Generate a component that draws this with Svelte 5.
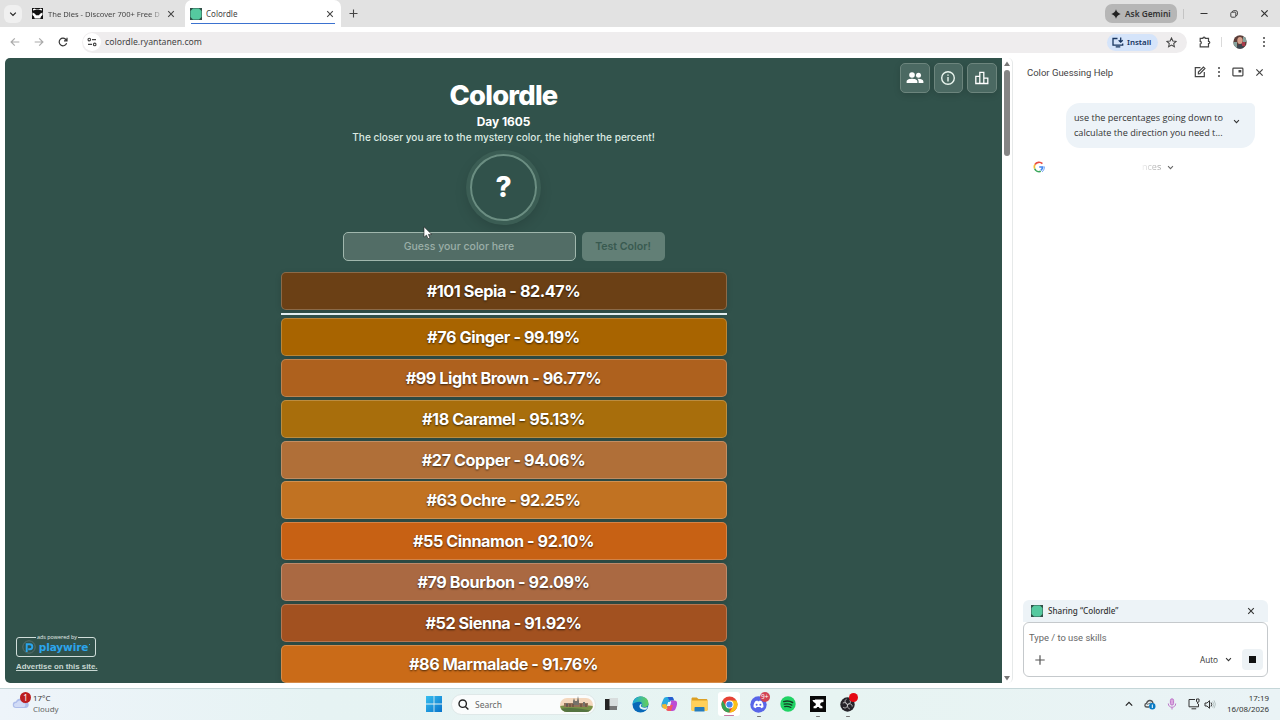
<script>
    const day = 1605;

    const latest = { number: 101, name: 'Sepia', percent: '82.47', color: '#6b4015' };

    const guesses = [
        { number: 76, name: 'Ginger', percent: '99.19', color: '#a86400' },
        { number: 99, name: 'Light Brown', percent: '96.77', color: '#ae611e' },
        { number: 18, name: 'Caramel', percent: '95.13', color: '#a86e0c' },
        { number: 27, name: 'Copper', percent: '94.06', color: '#b06f38' },
        { number: 63, name: 'Ochre', percent: '92.25', color: '#c17222' },
        { number: 55, name: 'Cinnamon', percent: '92.10', color: '#c76114' },
        { number: 79, name: 'Bourbon', percent: '92.09', color: '#aa6942' },
        { number: 52, name: 'Sienna', percent: '91.92', color: '#a25120' },
        { number: 86, name: 'Marmalade', percent: '91.76', color: '#ca6b18' }
    ];

    let guess = '';
</script>

{#snippet close(size)}
    <svg width={size} height={size} viewBox="0 0 10 10" fill="none" stroke="currentColor" stroke-width="1.35"><path d="M1.5 1.5l7 7M8.5 1.5l-7 7" /></svg>
{/snippet}

{#snippet chevron(size)}
    <svg width={size} height={size} viewBox="0 0 10 10" fill="none" stroke="currentColor" stroke-width="1.5"><path d="M1.5 3.2L5 6.7l3.5-3.5" /></svg>
{/snippet}

{#snippet dots()}
    <svg width="4" height="12" viewBox="0 0 4 12" fill="currentColor"><circle cx="2" cy="2" r="1" /><circle cx="2" cy="6" r="1" /><circle cx="2" cy="10" r="1" /></svg>
{/snippet}

{#snippet swatch()}
    <svg width="12" height="12" viewBox="0 0 12 12"><path fill="#315048" d="M0 0h12v12H0z" /><path fill="#55c99f" d="M3 .5h6L11.500 3v6L9 11.500H3L.5 9V3z" /></svg>
{/snippet}

{#snippet row(item)}
    <div class="guess" style="background-color: {item.color}">#{item.number} {item.name} - {item.percent}%</div>
{/snippet}

<div class="screen">
    <div class="tabs">
        <div class="tab-search">{@render chevron(8)}</div>
        <div class="tab">
            <svg width="11" height="11" viewBox="0 0 11 11"><path fill="#111" d="M0 0h11v11H0z" /><path fill="#fff" d="M1 1.200l1.500-.7L4 1.500h3L8.500.5l1.500.7v1.300L8 2H3l-2 .5zM.5 4.500L3 5.800l1 1.400h3l1-1.400 2.500-1.300V7L9 8.500 8.300 10.500H2.700L2 8.500.5 7z" /></svg>
            <span class="tab-title fade">The Dles - Discover 700+ Free D</span>
            {@render close(8)}
        </div>
        <div class="tab active">
            {@render swatch()}
            <span class="tab-title">Colordle</span>
            {@render close(8)}
        </div>
        <svg class="new-tab" width="9" height="9" viewBox="0 0 9 9" stroke="#444" stroke-width="1.1"><path d="M4.500 .5v8M.5 4.500h8" /></svg>
        <div class="gemini">
            <svg width="10" height="10" viewBox="0 0 10 10"><path fill="#222" d="M5 .3Q6 4 9.700 5 6 6 5 9.700 4 6 .3 5 4 4 5 .3z" /></svg>
            Ask Gemini
        </div>
        <span class="strip-line"></span>
        <div class="window-buttons">
            <svg width="8" height="8" viewBox="0 0 8 8" stroke="#333"><path d="M.5 3.500h7" /></svg>
            <svg width="8" height="8" viewBox="0 0 8 8" fill="none" stroke="#333" stroke-width=".9"><rect x=".8" y="2.200" width="5" height="5" rx="1" /><path d="M2.400 1.900c0-.8.500-1.200 1.200-1.200h2.400c.8 0 1.400.6 1.400 1.400v2.300c0 .8-.5 1.200-1.200 1.200" /></svg>
            {@render close(9)}
        </div>
    </div>

    <div class="toolbar">
        <div class="nav">
            <svg class="off" width="10" height="10" viewBox="0 0 10 10"><path d="M9.300 5H1.200M4.800 1.300L1.100 5l3.700 3.700" /></svg>
            <svg class="off" width="10" height="10" viewBox="0 0 10 10"><path d="M.7 5h8.100M5.200 1.300L8.900 5 5.200 8.700" /></svg>
            <svg width="10" height="10" viewBox="0 0 10 10"><path d="M8.600 6.100A3.800 3.800 0 1 1 8.100 2.800L9 3.800M9 .8v3H6" /></svg>
        </div>
        <div class="address">
            <span class="site-info">
                <svg width="10" height="10" viewBox="0 0 10 10" fill="none" stroke="#444" stroke-width="1.100"><circle cx="2.300" cy="2.600" r="1.300" /><path d="M5 2.600h4M1 7.400h4" /><circle cx="7.700" cy="7.400" r="1.300" /></svg>
            </span>
            <span class="url">colordle.ryantanen.com</span>
            <span class="install">
                <svg width="12" height="11" viewBox="0 0 12 11" fill="none" stroke="#17345f" stroke-width="1.300"><path d="M5.500 1.500H1v6.700h9.700V6.600M3.700 9.900h4.600M8.700 .5v4.400M6.700 3.200l2 2 2-2" /></svg>
                Install
            </span>
            <svg width="11" height="11" viewBox="0 0 12 12" fill="none" stroke="#444" stroke-width="1.100"><path d="M6 1l1.500 3.300 3.600.4-2.700 2.400.8 3.600L6 8.900l-3.200 1.800.8-3.600L.9 4.700l3.600-.4z" /></svg>
        </div>
        <svg class="puzzle" width="12" height="12" viewBox="0 0 12 12" fill="none" stroke="#444" stroke-width="1.200"><path d="M1.200 2.300h2.700c0-1.600 2.300-1.600 2.300 0h3.300v3c1.700 0 1.700 2.200 0 2.200v3.300H1.200V8c1.500-.2 1.500-2.400 0-2.600z" /></svg>
        <span class="tool-line"></span>
        <svg class="avatar" width="14" height="14" viewBox="0 0 14 14"><clipPath id="face"><circle cx="7" cy="7" r="6.700" /></clipPath><g clip-path="url(#face)"><path fill="#5a3d38" d="M0 0h14v14H0z" /><path fill="#86a29d" d="M0 7h4v7H0zM10 2h4v5h-4z" /><ellipse cx="7" cy="5.500" rx="2.700" ry="3.500" fill="#d8a18c" /><path fill="#3a4650" d="M3 14l2-4 3-1 4 5z" /><path fill="#a83b4c" d="M9 7h3v4H9z" /></g></svg>
        <span class="menu">{@render dots()}</span>
    </div>

    <div class="content">
        <main>
            <div class="corner-buttons">
                <button aria-label="Friends"><svg width="18" height="14" viewBox="0 0 18 14" fill="#fff"><circle cx="6" cy="4" r="2.800" /><circle cx="12.500" cy="4.200" r="2.500" /><path d="M.6 12v-1.500C.6 8.400 4 7.800 6 7.800s5.400.6 5.400 2.700V12zM12.600 12v-1.500c0-1.100-.5-2-1.300-2.700 2.800-.3 6.100.5 6.100 2.700V12z" /></svg></button>
                <button aria-label="About"><svg width="16" height="16" viewBox="0 0 16 16" fill="none" stroke="#e9f5ee" stroke-width="1.400"><circle cx="8" cy="8" r="6.300" /><path d="M8 7v4.500M8 4.400v1.400" /></svg></button>
                <button aria-label="Statistics"><svg width="14" height="14" viewBox="0 0 14 14" fill="none" stroke="#fff" stroke-width="1.300"><path d="M.8 5.300h4v7.200h-4zM4.800 1.300h4v11.200h-4zM8.800 7.200h4v5.300h-4z" /></svg></button>
            </div>
            <h1>Colordle</h1>
            <h2>Day {day}</h2>
            <p>The closer you are to the mystery color, the higher the percent!</p>
            <div class="mystery">?</div>
            <form>
                <input bind:value={guess} placeholder="Guess your color here" />
                <button disabled>Test Color!</button>
            </form>
            <div class="guesses">
                {@render row(latest)}
                <hr />
                {#each guesses as item}
                    {@render row(item)}
                {/each}
            </div>
            <div class="ads">
                <div class="playwire">
                    <span class="powered">ads powered by</span>
                    <svg width="14" height="14" viewBox="0 0 14 14" fill="none"><circle cx="7" cy="7" r="6.200" stroke="#596f6c" /><path d="M4.700 12V4.200h3.200c3.200 0 3.200 5 0 5H6.200" stroke="#2ba5ed" stroke-width="1.900" /></svg>
                    <b>playwire</b><i></i>
                </div>
                <a href="#advertise">Advertise on this site.</a>
            </div>
        </main>
        <div class="scrollbar">
            <svg width="8" height="6" viewBox="0 0 8 6"><path d="M4 .5L7 5H1z" /></svg>
            <span class="thumb"></span>
            <svg width="8" height="6" viewBox="0 0 8 6"><path d="M4 5.500L1 1h6z" /></svg>
        </div>
        <aside>
            <header>
                <span>Color Guessing Help</span>
                <svg width="12" height="12" viewBox="0 0 12 12" fill="none" stroke="currentColor" stroke-width="1.200"><path d="M6.500 1.700H1.300v9h9V6M4.400 7.800V6l5-5 1.500 1.500-5 5.100z" /></svg>
                {@render dots()}
                <svg width="12" height="10" viewBox="0 0 12 10"><rect x=".9" y="1.200" width="10" height="7.600" rx=".7" fill="none" stroke="currentColor" stroke-width="1.200" /><path fill="currentColor" d="M6.500 3h2.800v2.500H6.500z" /></svg>
                {@render close(9)}
            </header>
            <div class="prompt">
                <span>use the percentages going down to<br />calculate the direction you need t...</span>
                {@render chevron(7)}
            </div>
            <div class="thinking">
                <svg width="12" height="12" viewBox="0 0 12 12" fill="none" stroke-width="1.700"><path stroke="#e94b40" d="M9.400 2.700A4.700 4.700 0 0 0 2 3.500" /><path stroke="#f5bd35" d="M2 3.500a4.700 4.700 0 0 0-.3 4.200" /><path stroke="#3ba75b" d="M1.700 7.700a4.700 4.700 0 0 0 6.100 2.600" /><path stroke="#4387ef" d="M6.200 6h3.400c0 1.700-.6 2.600-1.800 3.300" /><path stroke="#4387ef" stroke-width=".8" d="M11.300 5.500c.2 2.300-.7 4.200-2.200 5.300" /></svg>
                <span class="shimmer">nces</span>
                {@render chevron(7)}
            </div>
            <div class="composer">
                <div class="sharing">
                    {@render swatch()}
                    <span>Sharing “Colordle”</span>
                    {@render close(8)}
                </div>
                <div class="box">
                    <div class="hint">Type / to use skills</div>
                    <div class="actions">
                        <svg width="10" height="10" viewBox="0 0 10 10" stroke="#555" stroke-width="1.200"><path d="M5 .3v9.400M.3 5h9.400" /></svg>
                        <span class="mode">Auto</span>
                        {@render chevron(7)}
                        <span class="stop"></span>
                    </div>
                </div>
            </div>
        </aside>
    </div>

    <footer>
        <div class="weather">
            <div class="cloud">
                <svg width="18" height="14" viewBox="0 0 18 14"><path fill="#aebdea" d="M4 13a3.200 3.200 0 0 1 0-6.500C5 3 11 2 12.500 6 18 6 18 13 13.500 13z" /><path fill="#d1dbf6" d="M3.500 12a2 2 0 0 1 1-4C6 5 10 4.500 11 8c3 0 3 3.500 1 4z" /></svg>
                <span>1</span>
            </div>
            <div>17°C<br /><small>Cloudy</small></div>
        </div>
        <div class="apps">
            <svg width="16" height="16" viewBox="0 0 16 16"><linearGradient id="win" x2="1" y2="1"><stop stop-color="#38bff0" /><stop offset="1" stop-color="#0873cb" /></linearGradient><path fill="url(#win)" d="M0 0h7.600v7.600H0zM8.400 0H16v7.600H8.400zM0 8.400h7.600V16H0zM8.400 8.400H16V16H8.400z" /></svg>
            <div class="search">
                <svg width="11" height="11" viewBox="0 0 11 11" fill="none" stroke="#222" stroke-width="1.400"><circle cx="4.700" cy="4.700" r="3.700" /><path d="M7.400 7.400l3 3" /></svg>
                <span>Search</span>
                <svg width="33" height="17" viewBox="0 0 33 17"><clipPath id="scene"><rect y="2" width="33" height="14" rx="7" /></clipPath><g clip-path="url(#scene)"><path fill="#f4d7bd" d="M0 0h33v17H0z" /><path fill="#799047" d="M0 10q16-3 33 0v7H0z" /><path fill="#557441" d="M0 13q12-3 33 2v2H0z" /><path fill="#947158" d="M4 7h24v4H4z" /></g><path fill="#76716a" d="M13 9V5l1-3 1 3h2l1-5 1 5v4zM6 7h2v3H6zM23 6h2v4h-2z" /><path stroke="#45342d" stroke-width=".7" d="M7 8v3M10 8v3M13 8v3M21 8v3M26 8v3" /></svg>
            </div>
            <div class="app"><svg width="14" height="14" viewBox="0 0 14 14"><path fill="#d8dddd" d="M5 1h9v9H5z" /><path fill="#242424" d="M1 2h4.500v7H13v4H1z" /><path fill="#777" d="M5.500 9H13v4H5.500z" /></svg></div>
            <div class="app"><svg width="17" height="17" viewBox="0 0 17 17"><linearGradient id="edge" x2="1"><stop stop-color="#18a9dd" /><stop offset="1" stop-color="#67cf55" /></linearGradient><circle cx="8.500" cy="8.500" r="8" fill="#0868b8" /><path fill="url(#edge)" d="M.6 8C1.500-1.500 15.900-2 16.500 7.300c.2 4-4.500 4.600-6.800 3.100 1.200-2.800.2-4.600-2.200-4.600C4.400 5.800 1.800 7 .6 8z" /><path fill="#e6f4f3" d="M9.300 7.500c.5 1 .2 2-.5 2.600 1.300 2 4.700 2.200 7 .7-.4 1-1 1.800-1.700 2.600-5.200 1.400-9.200-3-4.800-5.900z" /></svg></div>
            <div class="app"><svg width="17" height="16" viewBox="0 0 17 16"><path fill="#28a9e0" d="M5.500 1h5.200c1.200 0 1.500.9 1.800 2l.5 1.500H9.300L7 12H3C0 12 0 9 1 6.500L2.500 3C3 1.700 4 1 5.500 1z" /><path fill="#285ccf" d="M6.500 1h4.200c1.200 0 1.500.9 1.800 2l.5 1.500H8.500z" /><path fill="#f1b733" d="M1 8.500L5 8l2 4-2 1c-2 .5-4-1-4-4.500z" /><path fill="#bd4dd4" d="M10 4.500h3.500c3 0 3 3.500 2 6L14.500 13c-.5 1.300-1.500 2-3 2H7L10 4.500z" /><path fill="#f15763" d="M7 9h5l-2 6H7c-1.200 0-1.500-.9-2-2h1z" /><path fill="#e9f4f4" d="M7.200 6h3.100L9 10H5.800z" /></svg></div>
            <div class="app"><svg width="17" height="15" viewBox="0 0 17 15"><path fill="#dc9f23" d="M.5 2c0-1 .4-1.500 1.200-1.500h4L7.500 2H15c1 0 1.500.5 1.500 1.500V13H.5z" /><path fill="#ffd05a" d="M.5 3.500h16v10.500H.5z" /><path fill="#257cbd" d="M3.500 14.500V11c0-.6.400-1 1-1h8c.6 0 1 .4 1 1v3.500z" /></svg></div>
            <div class="app selected"><svg width="17" height="17" viewBox="0 0 17 17"><circle cx="8.500" cy="8.500" r="8" fill="#e64235" /><path fill="#34a353" d="M1.570 4.500L5.040 10.500 8.500 12.500 8.500 16.500A8 8 0 0 1 1.570 4.500z" /><path fill="#fbc116" d="M8.500 4.500h6.930A8 8 0 0 1 8.500 16.500L12 10.500z" /><circle cx="8.500" cy="8.500" r="4" fill="#fff" /><circle cx="8.500" cy="8.500" r="3.100" fill="#4385e9" /></svg></div>
            <div class="app open"><svg width="17" height="17" viewBox="0 0 17 17"><circle cx="8.500" cy="8.500" r="8.200" fill="#5865e8" /><path fill="#fff" d="M5.300 5.200l2-.7.5.8h1.400l.5-.8 2 .7c1.400 2 2 4 1.700 6l-2.300 1-.7-1.200H6.600l-.7 1.200-2.300-1c-.3-2 .3-4 1.700-6z" /><circle cx="6.600" cy="8.700" r="1" fill="#5865e8" /><circle cx="10.400" cy="8.700" r="1" fill="#5865e8" /></svg><span class="unread">9+</span></div>
            <div class="app"><svg width="16" height="16" viewBox="0 0 16 16" fill="none" stroke="#143e23" stroke-linecap="round"><circle cx="8" cy="8" r="7.700" fill="#20d364" stroke="none" /><path stroke-width="1.500" d="M3.700 5.600c3-.8 6.500-.5 8.900.9" /><path stroke-width="1.300" d="M4.200 8.200c2.600-.6 5.400-.3 7.600.9" /><path stroke-width="1.100" d="M4.600 10.600c2.200-.5 4.400-.2 6.300.8" /></svg></div>
            <div class="app open"><svg width="16" height="16" viewBox="0 0 16 16"><path fill="#080808" d="M0 0h16v16H0z" /><path fill="#fff" d="M2.500 4H5v-.5h8.500V6c-2 0-3 .8-3.300 2v1.200l2.300 1.300v1.800h-2.800L8.800 11H7.200l-.9 1.300H3.500v-1.800l2.300-1.300V8C5.500 6.500 3 6.500 2.500 4z" /></svg></div>
            <div class="app open"><svg width="15" height="15" viewBox="0 0 15 15"><circle cx="7.500" cy="7.500" r="7.200" fill="#252329" /><g fill="none" stroke="#c8c8c8" stroke-width=".9"><path d="M6.500 2.200c-2.600 1.200-1.400 4.500 1 5.300 2.300-1.600 4.900-.3 4.700 2" /><path d="M7.500 7.500c.3 3-2.400 4.400-4.400 2.700M9.800 3c1.300 1.900.5 3.900-2.300 4.500M2.800 6c2.400-.9 3.800-.2 4.700 1.500M9.800 12c-1.800-.6-2.500-2-2.300-4.500" /></g></svg><span class="recording"></span></div>
        </div>
        <div class="tray">
            <svg width="8" height="8" viewBox="0 0 10 10" fill="none" stroke="#222" stroke-width="1.500"><path d="M1 7l4-4 4 4" /></svg>
            <svg width="12" height="11" viewBox="0 0 12 11"><path fill="none" stroke="#555" stroke-width="1.300" d="M5 8H2.800C.3 8 .3 4.800 2.500 4.500 3.500.6 8 .6 9 4" /><path fill="none" stroke="#777" d="M3 5.500Q6 3 10 5" /><circle cx="8.300" cy="7.300" r="3.200" fill="#087bc5" /><path stroke="#fff" d="M8.300 5.500v3.500" /></svg>
            <svg width="10" height="12" viewBox="0 0 10 12" fill="none" stroke="#bd75c9"><rect x="3.400" y=".8" width="3.200" height="6.300" rx="1.600" fill="#dba7e0" /><path d="M1.300 5.500c0 5 7.400 5 7.400 0M5 9.300v2.200" /></svg>
            <svg width="12" height="12" viewBox="0 0 12 12" fill="none" stroke="#333"><path d="M7 1.500H1v7.300h9.500V6M3.500 10.800h4.700" /><path d="M8.500 1v2.300c0 1.300 2.500 1.300 2.500 0V1zM9.700 4v2" /></svg>
            <svg width="12" height="11" viewBox="0 0 12 11" fill="none" stroke="#333"><path d="M1 4h2l2.500-2.300v7.600L3 7H1z" /><path d="M7 3.500q1.500 2 0 4" /><path stroke="#b7c4c4" d="M8.600 2.500q2.500 3 0 6M10 1.300q3 4 0 8" /></svg>
            <div class="clock">17:19<br />16/08/2026</div>
        </div>
    </footer>

    <svg class="cursor" width="10" height="14" viewBox="0 0 10 14"><path fill="#fff" stroke="#222" stroke-width=".6" d="M1 .8v10.400l2.500-2.100 1.500 3.600 1.900-.8-1.500-3.500h3.300z" /></svg>
</div>

<style>
    :global(body) {
        margin: 0;
        overflow: hidden;
    }

    svg {
        flex: none;
        display: block;
    }

    .screen {
        position: relative;
        display: flex;
        flex-direction: column;
        width: 1280px;
        height: 720px;
        overflow: hidden;
        background: #fff;
        color: #333;
        font-family: "Noto Sans", "Open Sans", sans-serif;
        font-size: 8.5px;
        box-sizing: border-box;
    }

    .screen :global(*) {
        box-sizing: border-box;
    }

    /* browser chrome */
    .tabs {
        display: flex;
        align-items: center;
        flex: none;
        height: 27px;
        background: #e2e2e2;
    }

    .tab-search {
        display: grid;
        place-items: center;
        width: 18px;
        height: 18px;
        margin-left: 4px;
        border-radius: 6px;
        background: #f0f0f0;
        color: #222;
    }

    .tab {
        display: flex;
        align-items: center;
        width: 156px;
        height: 27px;
        padding: 0 3px 0 10px;
        color: #444;
        font-size: 8px;
    }

    .tab-title {
        flex: 1;
        margin-left: 5px;
        white-space: nowrap;
    }

    .fade {
        font-size: 7.6px;
        mask-image: linear-gradient(90deg, #000 85%, transparent 97%);
    }

    .active {
        position: relative;
        margin-left: 7px;
        padding: 0 7px 0 5px;
        border-radius: 7px 7px 0 0;
        background: #fff;
    }

    .active .tab-title {
        margin-left: 4px;
    }

    .active::after {
        content: "";
        position: absolute;
        left: 6px;
        right: 6px;
        bottom: 3px;
        height: 1px;
        background: #3b72d0;
    }

    .new-tab {
        margin-left: 8px;
    }

    .gemini {
        display: flex;
        align-items: center;
        gap: 4px;
        width: 72px;
        height: 19px;
        margin-left: auto;
        padding-left: 6px;
        border-radius: 7px;
        background: #b6b6b6;
        color: #333;
        font-size: 8.3px;
        font-weight: 600;
        white-space: nowrap;
    }

    .strip-line {
        width: 1px;
        height: 10px;
        margin-left: 6px;
        background: #c4c4c4;
    }

    .window-buttons {
        display: flex;
        align-items: center;
        gap: 22px;
        margin: 0 11px 0 16px;
    }

    .toolbar {
        display: flex;
        align-items: center;
        flex: none;
        height: 30px;
        border-radius: 5px 5px 0 0;
        background: #fff;
        color: #444;
    }

    .nav {
        display: flex;
        gap: 14px;
        margin-left: 10px;
    }

    .nav svg {
        fill: none;
        stroke: #333;
        stroke-width: 1.2;
    }

    .nav .off {
        stroke: #aaa;
    }

    .address {
        display: flex;
        align-items: center;
        width: 1105px;
        height: 21px;
        margin-left: 14px;
        padding: 0 10px 0 1px;
        border-radius: 11px;
        background: #efedee;
    }

    .site-info {
        display: grid;
        place-items: center;
        width: 18px;
        height: 18px;
        border-radius: 50%;
        background: #fff;
    }

    .url {
        margin-left: 4px;
        font-size: 8.7px;
    }

    .install {
        display: flex;
        align-items: center;
        gap: 3px;
        width: 51px;
        height: 17px;
        margin: 0 8px 0 auto;
        padding-left: 5px;
        border-radius: 9px;
        background: #d5e4fa;
        color: #17345f;
        font-size: 7.9px;
        font-weight: 600;
    }

    .puzzle {
        margin-left: 12px;
    }

    .tool-line {
        width: 1px;
        height: 10px;
        margin: 0 11px 0 10px;
        background: #dadada;
    }

    .menu {
        margin-left: 15px;
    }

    /* game page */
    .content {
        display: flex;
        flex: none;
        height: 631px;
        padding: 1px 0 0 5px;
    }

    main {
        position: relative;
        display: flex;
        flex-direction: column;
        align-items: center;
        width: 997px;
        height: 625px;
        border-radius: 5px 0 0 5px;
        background: #31524b;
        color: #fff;
        font-family: Inter, sans-serif;
        overflow: hidden;
    }

    .corner-buttons {
        position: absolute;
        top: 5px;
        right: 5.5px;
        display: flex;
        gap: 4px;
    }

    .corner-buttons button {
        display: grid;
        place-items: center;
        width: 29.5px;
        height: 30px;
        padding: 0;
        border: 1px solid #6c857d;
        border-radius: 5px;
        background: #4b6962;
        box-shadow: 0 2px 7px #0002;
    }

    h1 {
        margin: 20px 0 0;
        font-size: 27.3px;
        font-weight: 800;
        letter-spacing: -.75px;
        line-height: 35px;
    }

    h2 {
        margin: .4px 0 0;
        font-size: 11.9px;
        font-weight: 700;
        line-height: 17px;
    }

    p {
        margin: 0;
        color: #dceae2;
        font-size: 10.05px;
        font-weight: 500;
        line-height: 15px;
    }

    .mystery {
        display: grid;
        place-items: center;
        flex: none;
        width: 67px;
        height: 67px;
        margin-top: 8.6px;
        border: 2px solid #6b8e82;
        border-radius: 50%;
        box-shadow: 0 0 0 4px #3b5d54, 0 5px 16px #0003;
        font-size: 28px;
        font-weight: 800;
    }

    form {
        display: flex;
        gap: 6px;
        margin-top: 11px;
    }

    input {
        width: 233px;
        height: 29px;
        padding: 1px 0 0;
        border: 1px solid #a0b7ad;
        border-radius: 5px;
        background: #526d66;
        color: #fff;
        font: 500 10.5px Inter, sans-serif;
        text-align: center;
    }

    input::placeholder {
        color: #9bafa8;
    }

    form button {
        width: 83px;
        height: 29px;
        padding: 1px 0 0;
        border: 0;
        border-radius: 5px;
        background: #627f76;
        color: #395a50;
        font: 600 10.6px Inter, sans-serif;
    }

    .guesses {
        flex: none;
        width: 446px;
        margin-top: 11px;
    }

    .guess {
        height: 38px;
        margin-bottom: 2.9px;
        border: 1px solid #ffffff38;
        border-radius: 5px;
        font-size: 16.2px;
        font-weight: 700;
        letter-spacing: -.42px;
        line-height: 36px;
        text-align: center;
        text-shadow: 0 1px 2px #000a;
        box-shadow: 0 2px 6px #0002;
    }

    hr {
        height: 2px;
        margin: 0 0 3px;
        border: 0;
        background: #e2eeef;
    }

    .ads {
        position: absolute;
        left: 11px;
        bottom: 11px;
    }

    .playwire {
        position: relative;
        display: flex;
        align-items: center;
        justify-content: center;
        gap: 3px;
        width: 80px;
        height: 20px;
        border: 1px solid #d1deda;
        border-radius: 3px;
        color: #2ba5ed;
        font-family: "DejaVu Sans", sans-serif;
        font-size: 10.5px;
        letter-spacing: -.1px;
        line-height: 14px;
    }

    .playwire i {
        width: 1px;
        height: 1px;
        margin: 0 0 5px -2px;
        background: #2ba5ed;
    }

    .powered {
        position: absolute;
        top: -5px;
        left: 19px;
        padding: 0 1px;
        background: #31524b;
        color: #e6eeeb;
        font-family: "Open Sans", sans-serif;
        font-size: 5.4px;
        letter-spacing: 0;
        line-height: 8px;
        white-space: nowrap;
    }

    .ads a {
        display: block;
        margin-top: 5px;
        color: #c8d7d2;
        font-family: "Liberation Sans", sans-serif;
        font-size: 7.85px;
        font-weight: 700;
        line-height: 10px;
        white-space: nowrap;
    }

    .scrollbar {
        display: flex;
        flex-direction: column;
        align-items: center;
        width: 11px;
        height: 625px;
        padding: 3px 1px 2px 0;
        border-right: 1px solid #e6e9e9;
        border-radius: 0 5px 5px 0;
        fill: #777;
    }

    .thumb {
        width: 6px;
        height: 86px;
        margin: 3px 0 auto;
        border-radius: 3px;
        background: #858585;
    }

    /* assistant panel */
    aside {
        display: flex;
        flex-direction: column;
        width: 267px;
        padding: 0 12px 11px 10px;
        font-family: "Open Sans", sans-serif;
    }

    header {
        display: flex;
        align-items: center;
        gap: 11px;
        height: 28px;
        padding: 0 4px;
        color: #444;
        font-family: Roboto, sans-serif;
        font-size: 9.5px;
    }

    header span {
        margin-right: auto;
    }

    .prompt {
        display: flex;
        gap: 10px;
        align-self: flex-end;
        width: 189px;
        height: 45px;
        margin: 17px 13px 0 0;
        padding: 8px 0 0 8px;
        border-radius: 14px 5px 14px 14px;
        background: #edf3f8;
        font-size: 9.15px;
        line-height: 14.5px;
        white-space: nowrap;
    }

    .prompt :global(svg) {
        margin-top: 7px;
    }

    .thinking {
        display: flex;
        align-items: center;
        margin: 13px 0 0 10px;
        color: #666;
        font-size: 9px;
        line-height: 12px;
    }

    .shimmer {
        margin: 0 6px 0 97px;
        background: linear-gradient(90deg, #eee, #999);
        background-clip: text;
        color: transparent;
    }

    .composer {
        margin-top: auto;
    }

    .sharing {
        display: flex;
        align-items: center;
        gap: 5px;
        height: 22px;
        padding: 0 13px 1px 8px;
        border-radius: 6px 6px 0 0;
        background: #edf3f7;
        font-family: "Noto Sans", sans-serif;
        font-size: 8.1px;
        font-weight: 500;
    }

    .sharing span {
        margin-right: auto;
    }

    .box {
        height: 55px;
        padding: 8px 4px 3px 5px;
        border: 1px solid #c5c9cc;
        border-radius: 6px;
        background: #fff;
    }

    .hint {
        color: #666;
        font-family: Roboto, sans-serif;
        font-size: 9.4px;
        line-height: 14px;
    }

    .actions {
        display: flex;
        align-items: center;
        margin: 4px 0 0 6px;
    }

    .mode {
        margin: 0 7px 0 auto;
        font-size: 8.2px;
    }

    .stop {
        display: grid;
        place-items: center;
        width: 21px;
        height: 21px;
        margin-left: 10px;
        border-radius: 4px;
        background: #edf2f5;
    }

    .stop::after {
        content: "";
        width: 7px;
        height: 7px;
        background: #111;
    }

    /* taskbar */
    footer {
        display: grid;
        grid-template-columns: 425px 1fr 165px;
        flex: none;
        height: 32px;
        padding-bottom: 1px;
        border-top: 1px solid #c5d6d8;
        background: linear-gradient(90deg, #eef4fa, #e6f3f3 25%, #e7f4f2 65%, #eaf3f6);
    }

    .weather {
        display: flex;
        gap: 3px;
        padding: 4px 0 0 12px;
        font-size: 7.9px;
        line-height: 11px;
    }

    .weather small {
        color: #666;
        font-size: 7.9px;
    }

    .cloud {
        position: relative;
        padding-top: 2px;
    }

    .cloud span {
        position: absolute;
        top: -1px;
        left: 8px;
        width: 11px;
        height: 11px;
        border-radius: 50%;
        background: #bc1d20;
        color: #fff;
        font-size: 8px;
        text-align: center;
    }

    .apps {
        display: flex;
        align-items: center;
    }

    .search {
        display: flex;
        align-items: center;
        width: 145px;
        height: 21px;
        margin: 0 0 0 9px;
        padding: 0 2px 0 6px;
        border: 1px solid #dfe8e8;
        border-radius: 11px;
        background: #fafcfc;
    }

    .search span {
        margin: 0 auto 0 6px;
        color: #666;
        font-size: 8.5px;
    }

    .apps > svg {
        margin-left: 1px;
    }

    .app {
        position: relative;
        display: grid;
        place-items: center;
        flex: none;
        width: 22px;
        height: 24px;
        margin: 0 3.8px;
        border-radius: 3px;
    }

    .selected {
        background: #fff;
    }

    .open::after,
    .selected::after {
        content: "";
        position: absolute;
        left: 9px;
        bottom: -1px;
        width: 4px;
        height: 1.5px;
        border-radius: 1px;
        background: #777;
    }

    .selected::after {
        left: 6px;
        bottom: 0;
        width: 10px;
        background: #c979a3;
    }

    .unread {
        position: absolute;
        top: 0;
        left: 12px;
        width: 10px;
        height: 10px;
        border-radius: 50%;
        background: #d24453;
        color: #fff;
        font-size: 6.5px;
        line-height: 10px;
        text-align: center;
    }

    .recording {
        position: absolute;
        top: 1px;
        right: 1px;
        width: 9px;
        height: 9px;
        border-radius: 50%;
        background: #e50914;
    }

    .tray {
        display: flex;
        align-items: center;
        padding-left: 10px;
    }

    .tray svg {
        margin-right: 11px;
    }

    .tray svg:nth-of-type(4) {
        margin-right: 4px;
    }

    .clock {
        margin: 0 13px 0 auto;
        font-size: 7.9px;
        line-height: 11px;
        text-align: right;
    }

    .cursor {
        position: absolute;
        left: 423px;
        top: 226px;
    }
</style>
